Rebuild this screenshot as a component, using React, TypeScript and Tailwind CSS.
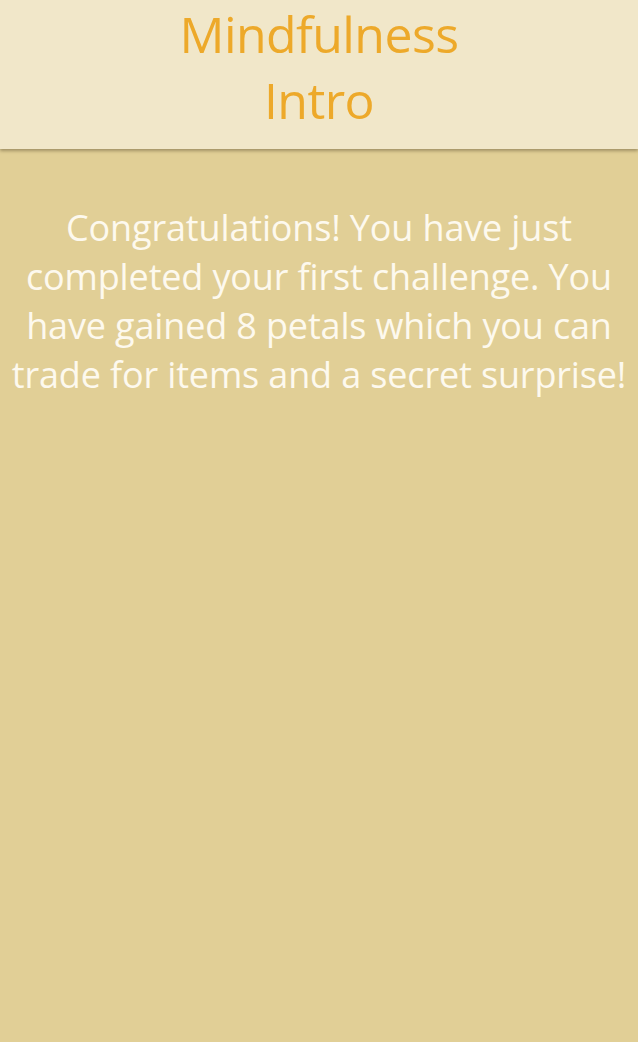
export default function App() {
  return (
    <div
      className="relative flex h-[1042px] w-[638px] flex-col overflow-hidden bg-[#e1cf96]"
      style={{ fontFamily: '"Open Sans", "Noto Sans", sans-serif' }}
    >
      {/* Header */}
      <header className="relative z-10 flex h-[149px] flex-col items-center bg-[#f1e7c9] pt-[1px] shadow-[0_2px_3px_rgba(110,95,60,0.55)]">
        <h1 className="text-center text-[50px] leading-[66px] font-normal tracking-[-0.6px] text-[#eda92a]">
          Mindfulness
          <br />
          Intro
        </h1>
      </header>

      {/* corner of the device frame */}
      <div className="absolute right-[-8px] top-[-6px] h-[20px] w-[10px] rounded-full bg-[#2a2620]" />

      {/* Body */}
      <main className="flex flex-col items-center pt-[54px]">
        <p className="text-center text-[36px] leading-[49px] tracking-[-0.15px] text-[#fdf9ee]">
          Congratulations! You have just
          <br />
          completed your first challenge. You
          <br />
          have gained 8 petals which you can
          <br />
          trade for items and a secret surprise!
        </p>
      </main>
    </div>
  );
}
